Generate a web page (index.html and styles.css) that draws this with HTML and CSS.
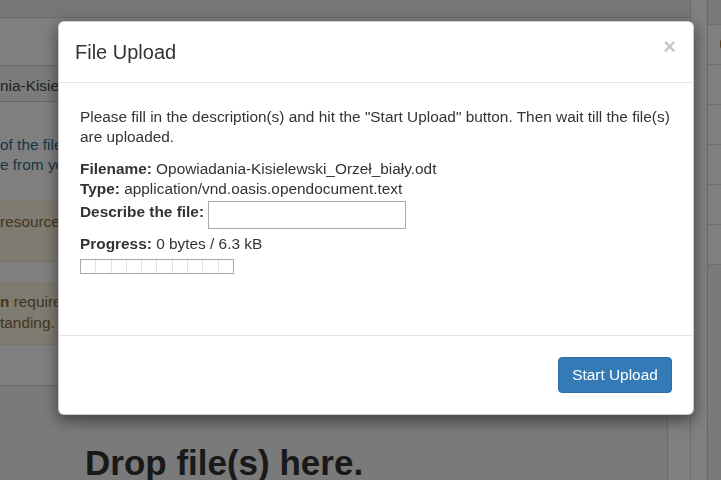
FILE: index.html
```html
<!DOCTYPE html>
<html lang="en">
<head>
<meta charset="utf-8">
<title>File Upload</title>
<link rel="stylesheet" href="styles.css">
</head>
<body>
<div class="page">
  <div class="main">
    <div class="topbar"></div>
    <div class="content">
      <div class="file-field">nia-Kisielewski_Orzeł_biały.odt</div>
      <p class="help">of the file(s) you want to upload<br>e from your computer.</p>
      <div class="alert alert-one">resources you upload are public</div>
      <div class="alert alert-two"><b>n</b> required for<br>tanding.</div>
    </div>
    <div class="dropzone">
      <div class="drop-text">Drop file(s) here.</div>
    </div>
  </div>
  <div class="side">
    <div class="side-row head"></div>
    <div class="side-row"><span class="dot"></span></div>
    <div class="side-row"></div>
    <div class="side-row"></div>
    <div class="side-row"></div>
    <div class="side-row"></div>
    <div class="side-row"></div>
  </div>
</div>

<div class="backdrop"></div>

<div class="modal">
  <div class="modal-header">
    <h4 class="modal-title">File Upload</h4>
    <span class="close">×</span>
  </div>
  <div class="modal-body">
    <p class="intro">Please fill in the description(s) and hit the "Start Upload" button. Then wait till the file(s) are uploaded.</p>
    <div class="info"><b>Filename:</b> Opowiadania-Kisielewski_Orzeł_biały.odt</div>
    <div class="info"><b>Type:</b> application/vnd.oasis.opendocument.text</div>
    <div class="describe">
      <label class="lbl">Describe the file:</label>
      <span class="text-input"></span>
    </div>
    <div class="info progress-line"><b>Progress:</b> 0 bytes / 6.3 kB</div>
    <div class="bar">
      <span class="seg"></span><span class="seg"></span><span class="seg"></span><span class="seg"></span><span class="seg"></span>
      <span class="seg"></span><span class="seg"></span><span class="seg"></span><span class="seg"></span><span class="seg"></span>
    </div>
  </div>
  <div class="modal-footer">
    <button class="btn">Start Upload</button>
  </div>
</div>
</body>
</html>
```

FILE: styles.css
```css
html, body {
  margin: 0;
  padding: 0;
  width: 721px;
  height: 480px;
  overflow: hidden;
  background: #fff;
  font-family: "Liberation Sans", Arial, sans-serif;
  color: #333;
}

.page {
  display: flex;
  height: 480px;
  width: 721px;
  overflow: hidden;
}

.main {
  flex: none;
  width: 690px;
  border-right: 1px solid #d6d6d6;
  display: flex;
  flex-direction: column;
  overflow: hidden;
}

.topbar {
  flex: none;
  height: 17px;
  background: #ececec;
  border-bottom: 1px solid #d6d6d6;
}

.content {
  flex: none;
  padding-top: 47px;
  height: 349px;
  box-sizing: border-box;
}

.file-field {
  height: 37px;
  box-sizing: border-box;
  border-top: 1px solid #cfcfcf;
  border-bottom: 1px solid #cfcfcf;
  background: #f6f6f6;
  font-size: 15.4px;
  line-height: 20px;
  padding-top: 10px;
  color: #444;
  white-space: nowrap;
}

.help {
  margin: 33px 0 0;
  font-size: 15.4px;
  line-height: 20px;
  color: #31708f;
}

.alert {
  font-size: 15.4px;
  line-height: 21px;
  color: #8a6d3b;
  background: #fcf8e3;
  border-top: 1px solid #faebcc;
  border-bottom: 1px solid #faebcc;
  box-sizing: border-box;
  height: 62px;
  white-space: nowrap;
}

.alert-one {
  margin-top: 25px;
  padding-top: 10px;
}

.alert-two {
  margin-top: 21px;
  padding-top: 7px;
}

.dropzone {
  flex: 1;
  min-height: 0;
  margin-top: 18px;
  margin-right: 22px;
  border-top: 1px solid #cfcfcf;
  border-right: 1px solid #d6d6d6;
  background: #f4f4f4;
  padding: 57px 0 0 85px;
}

.drop-text {
  font-size: 35px;
  line-height: 40px;
  font-weight: bold;
  color: #333;
  white-space: nowrap;
}

.side {
  flex: none;
  margin-left: 16px;
  width: 200px;
  border-left: 1px solid #cfcfcf;
  background: #f4f4f4;
}

.side-row {
  height: 39px;
  border-bottom: 1px solid #dcdcdc;
  background: #fff;
  padding-left: 12px;
}

.side-row.head {
  height: 24px;
  background: #f0f0f0;
}

.dot {
  display: inline-block;
  width: 6px;
  height: 10px;
  margin-top: 14px;
  border-radius: 3px;
  background: #b8864a;
}

.backdrop {
  position: fixed;
  inset: 0;
  background: rgba(0, 0, 0, 0.5);
}

.modal {
  position: fixed;
  left: 58px;
  top: 21px;
  width: 636px;
  height: 394px;
  box-sizing: border-box;
  background: #fff;
  border: 1px solid rgba(0, 0, 0, 0.2);
  border-radius: 6px;
  box-shadow: 0 5px 15px rgba(0, 0, 0, 0.5);
  display: flex;
  flex-direction: column;
  font-size: 15.4px;
  line-height: 20px;
  color: #333;
}

.modal-header {
  height: 61px;
  box-sizing: border-box;
  padding: 16px 17px 16px 16px;
  border-bottom: 1px solid #e5e5e5;
  display: flex;
  justify-content: space-between;
  align-items: flex-start;
}

.modal-title {
  margin: 0;
  font-size: 20px;
  line-height: 28px;
  font-weight: normal;
  color: #333;
}

.close {
  font-size: 22px;
  line-height: 22px;
  font-weight: bold;
  color: #000;
  opacity: 0.22;
  margin-top: -2px;
}

.modal-body {
  flex: 1;
  padding: 24px 14px 0 21px;
}

.intro {
  margin: 0 0 12px;
}

.info {
  white-space: nowrap;
}

.describe {
  display: flex;
  align-items: flex-start;
  gap: 4px;
  margin-top: 2px;
}

.lbl {
  font-weight: bold;
  padding-top: 1px;
}

.text-input {
  display: block;
  width: 198px;
  height: 28px;
  box-sizing: border-box;
  border: 1px solid #a9a9a9;
  background: #fff;
}

.progress-line {
  margin-top: 5px;
}

.bar {
  margin-top: 5px;
  width: 154px;
  height: 15px;
  box-sizing: border-box;
  border: 1px solid #aaa;
  display: flex;
}

.seg {
  flex: 1;
  border-right: 1px solid #e2e2e2;
}

.seg:last-child {
  border-right: none;
}

.modal-footer {
  height: 79px;
  box-sizing: border-box;
  border-top: 1px solid #e5e5e5;
  padding: 21px 21px 0 0;
  display: flex;
  justify-content: flex-end;
  align-items: flex-start;
}

.btn {
  width: 114px;
  height: 36px;
  box-sizing: border-box;
  padding: 0;
  font-family: "Liberation Sans", Arial, sans-serif;
  font-size: 15.4px;
  color: #fff;
  background: #337ab7;
  border: 1px solid #2e6da4;
  border-radius: 4px;
}
```
